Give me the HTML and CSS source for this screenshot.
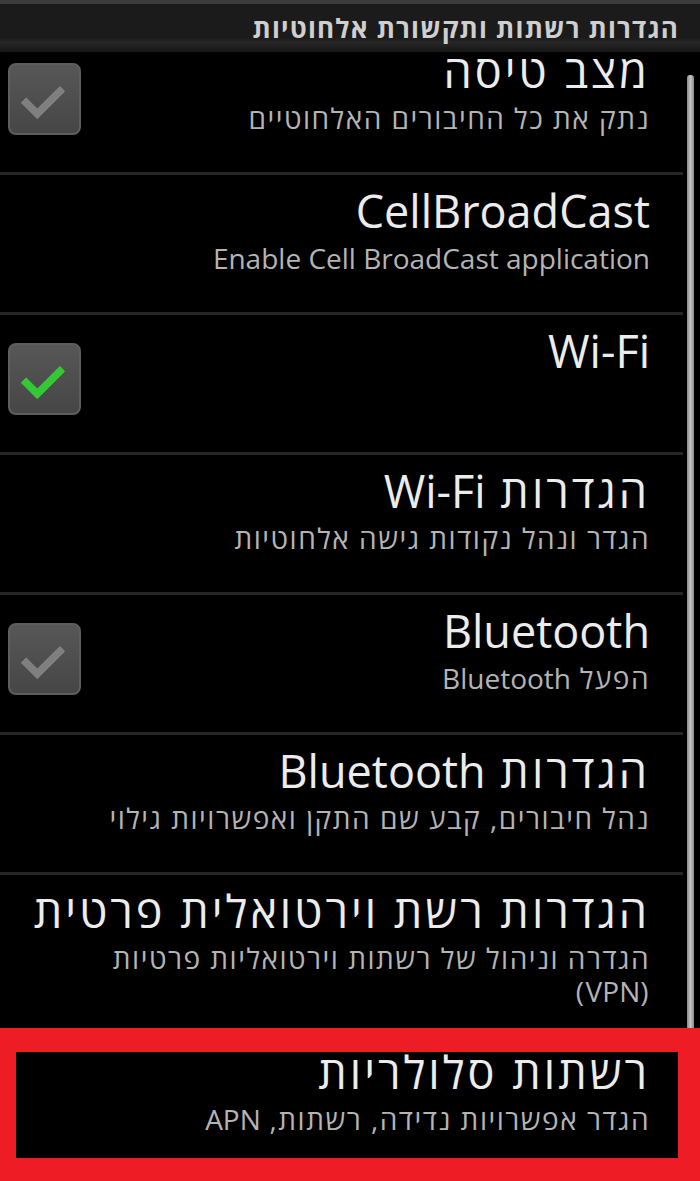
FILE: index.html
```html
<!DOCTYPE html>
<html lang="he">
<head>
    <meta charset="UTF-8">
    <meta name="viewport" content="width=device-width, initial-scale=1.0">
    <title>הגדרות רשתות ותקשורת אלחוטיות</title>
    <link rel="stylesheet" href="styles.css">
</head>
<body>
    <div class="screen">
        <div class="status-edge"></div>
        <header class="titlebar" dir="rtl">הגדרות רשתות ותקשורת אלחוטיות</header>

        <div class="list-area">
            <ul class="prefs" dir="rtl">
                <li class="pref first">
                    <div class="pref-text">
                        <div class="pref-title">מצב טיסה</div>
                        <div class="pref-summary">נתק את כל החיבורים האלחוטיים</div>
                    </div>
                    <span class="check"></span>
                </li>
                <li class="pref">
                    <div class="pref-text">
                        <div class="pref-title lat">CellBroadCast</div>
                        <div class="pref-summary lat">Enable Cell BroadCast application</div>
                    </div>
                </li>
                <li class="pref">
                    <div class="pref-text">
                        <div class="pref-title lat">Wi-Fi</div>
                    </div>
                    <span class="check on"></span>
                </li>
                <li class="pref">
                    <div class="pref-text">
                        <div class="pref-title">הגדרות <span class="lat">Wi-Fi</span></div>
                        <div class="pref-summary">הגדר ונהל נקודות גישה אלחוטיות</div>
                    </div>
                </li>
                <li class="pref">
                    <div class="pref-text">
                        <div class="pref-title lat">Bluetooth</div>
                        <div class="pref-summary">הפעל <span class="lat">Bluetooth</span></div>
                    </div>
                    <span class="check"></span>
                </li>
                <li class="pref">
                    <div class="pref-text">
                        <div class="pref-title">הגדרות <span class="lat">Bluetooth</span></div>
                        <div class="pref-summary">נהל חיבורים, קבע שם התקן ואפשרויות גילוי</div>
                    </div>
                </li>
                <li class="pref tall">
                    <div class="pref-text">
                        <div class="pref-title">הגדרות רשת וירטואלית פרטית</div>
                        <div class="pref-summary">הגדרה וניהול של רשתות וירטואליות פרטיות<br>(<span class="lat">VPN</span>)</div>
                    </div>
                </li>
                <li class="pref">
                    <div class="pref-text">
                        <div class="pref-title">רשתות סלולריות</div>
                        <div class="pref-summary">הגדר אפשרויות נדידה, רשתות, <span class="lat">APN</span></div>
                    </div>
                </li>
            </ul>
            <div class="scrollbar"></div>
        </div>

        <!-- red marker drawn over the last item -->
        <div class="highlight"></div>
    </div>
</body>
</html>
```

FILE: styles.css
```css
html, body {
    margin: 0;
    padding: 0;
    background-color: #000;
}

.screen {
    position: relative;
    width: 700px;
    height: 1181px;
    overflow: hidden;
    display: flex;
    flex-direction: column;
    background-color: #000;
    font-family: "Open Sans", "DejaVu Sans", sans-serif;
}

/* hebrew runs wide, latin words keep normal spacing */
.lat {
    letter-spacing: normal;
}

.status-edge {
    height: 4px;
    background-color: #3c3c3c;
}

/* Window title */
.titlebar {
    height: 48px;
    box-sizing: border-box;
    padding: 8px 21px 0 0;
    background: linear-gradient(to bottom, #1b1b1b 0%, #1b1b1b 70%, #262626 80%, #161616 100%);
    color: #cfcfcf;
    font-size: 26px;
    font-weight: bold;
    letter-spacing: 1.2px;
    line-height: 32px;
    text-align: right;
    white-space: nowrap;
}

.list-area {
    flex: 1;
    display: flex;
    gap: 4px;
    padding-right: 6px;
    overflow: hidden;
}

.prefs {
    flex: 1;
    list-style: none;
    margin: 0;
    padding: 0;
}

.pref {
    display: flex;
    align-items: flex-start;
    min-height: 140px;
    box-sizing: border-box;
    padding: 12px 0 0 8px;
    border-bottom: 3px solid #262626;
}

.pref.first {
    margin-top: -17px;
}

.pref.tall {
    padding-bottom: 25px;
}

.pref-text {
    flex: 1;
    padding-right: 33px;
    text-align: right;
}

.pref-title {
    color: #ececec;
    font-size: 45px;
    letter-spacing: 3px;
    line-height: 48px;
    white-space: nowrap;
}

.pref-summary {
    margin-top: 7px;
    color: #b4b4b4;
    font-size: 28px;
    letter-spacing: 1.5px;
    line-height: 33px;
}

.pref-title.lat,
.pref-summary.lat {
    letter-spacing: normal;
}

/* Checkbox */
.check {
    position: relative;
    flex: none;
    width: 73px;
    height: 72px;
    margin-top: 16px;
    box-sizing: border-box;
    border: 2px solid #5e5e5e;
    border-radius: 8px;
    background: linear-gradient(to bottom, #575757, #464646);
}

.check::after {
    content: "";
    position: absolute;
    left: 21px;
    top: 12px;
    width: 16px;
    height: 32px;
    border-right: 8px solid #7f7f7f;
    border-bottom: 8px solid #7f7f7f;
    border-radius: 2px;
    transform: rotate(45deg);
}

.check.on::after {
    border-color: #34c934;
}

.scrollbar {
    flex: none;
    width: 7px;
    height: 1060px;
    margin-top: 23px;
    border-radius: 3px;
    background: linear-gradient(to right, #8a8a8a, #c4c4c4 50%, #8a8a8a);
}

.highlight {
    position: absolute;
    left: 0;
    right: 0;
    top: 1028px;
    bottom: 0;
    border-style: solid;
    border-color: #ee1c25;
    border-width: 24px 22px 23px 16px;
}
```
